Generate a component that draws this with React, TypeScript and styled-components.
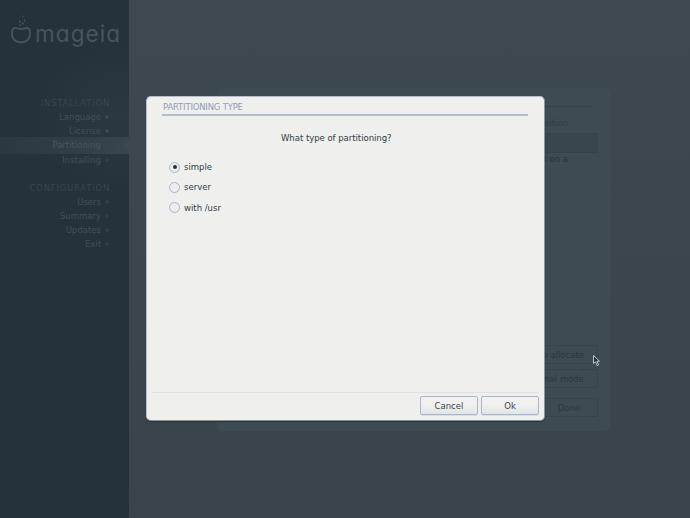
import React from 'react';
import styled, { createGlobalStyle } from 'styled-components';

const GlobalStyle = createGlobalStyle`
  * { box-sizing: border-box; }
  body { margin: 0; overflow: hidden; background: #3b464c; }
`;

const Screen = styled.div`
  position: relative;
  display: flex;
  width: 690px;
  height: 518px;
  overflow: hidden;
  background: linear-gradient(#3e494f, #39444a);
  color: #313d45;
  font: 8.5px/14px "DejaVu Sans", sans-serif;
  white-space: nowrap;
`;

const Sidebar = styled.nav`
  width: 129px;
  flex: none;
  padding-top: 15px;
  background:
    radial-gradient(ellipse 85px 75px at 118px 118px, #2b3841, transparent),
    #25323b;
`;

const Brand = styled.div`
  display: flex;
  height: 36px;
  padding-left: 10px;
  color: #48555d;
`;

const Wordmark = styled.span`
  margin-left: 3px;
  font: 400 22.5px/37px Inter, sans-serif;
  font-feature-settings: "cv11";
  letter-spacing: 1.1px;
`;

const StepGroup = styled.section<{ $top: number }>`
  margin-top: ${({ $top }) => $top}px;
`;

const GroupTitle = styled.div<{ $spacing: number }>`
  height: 14px;
  padding-right: 19px;
  color: #394650;
  text-align: right;
  letter-spacing: ${({ $spacing }) => $spacing}px;
`;

const Step = styled.div<{ $active?: boolean }>`
  position: relative;
  display: flex;
  align-items: center;
  justify-content: flex-end;
  height: 14.2px;
  padding-right: 21px;
  color: ${({ $active }) => ($active ? '#48555e' : '#424f58')};
  ${({ $active }) => $active && `
    &::before {
      content: '';
      position: absolute;
      inset: -1px 0 -1px;
      background: linear-gradient(90deg, #2b3841, #333f47 65%, #39464d);
    }
    &::after {
      content: '';
      position: absolute;
      right: 0;
      top: 2px;
      width: 6px;
      height: 11px;
      background: #3d484f;
      clip-path: polygon(100% 0, 0 50%, 100% 100%);
    }
  `}
`;

const StepLabel = styled.span`
  position: relative;
`;

const Bullet = styled.i<{ $done?: boolean }>`
  width: 4px;
  height: 4px;
  margin-left: 4px;
  margin-right: -1px;
  border: 1px solid #34414a;
  border-radius: 50%;
  background: ${({ $done }) => ($done ? '#435059' : '#2c3942')};
`;

const Installer = styled.main`
  width: 393px;
  height: 343px;
  margin: 88px 0 0 88px;
  padding: 18px 12px 14px;
  display: flex;
  flex-direction: column;
  border-radius: 5px;
  background: #3e4b53;
  box-shadow: 0 0 2px #3d4950;
`;

const InstallerRule = styled.div`
  height: 1px;
  flex: none;
  margin-right: 7px;
  background: #35424a;
`;

const InstallerText = styled.div<{ $top: number; $faint?: boolean }>`
  margin-top: ${({ $top }) => $top}px;
  padding-right: 30px;
  text-align: right;
  color: ${({ $faint }) => ($faint ? '#313e47' : '#25323b')};
`;

const Partition = styled.div`
  height: 20px;
  margin-top: 3px;
  background: #39464e;
  border: 1px solid #36424b;
`;

const InstallerButtons = styled.div`
  margin-top: auto;
  display: flex;
  flex-direction: column;
  align-items: flex-end;
`;

const DimButton = styled.button<{ $width: number; $gap?: number; $centered?: boolean }>`
  width: ${({ $width }) => $width}px;
  height: 19px;
  margin: 0 0 ${({ $gap = 0 }) => $gap}px;
  padding: 0 ${({ $centered }) => ($centered ? 0 : 13)}px 0 0;
  border: 1px solid #37444c;
  border-radius: 2px;
  background: transparent;
  color: #2a3740;
  font: inherit;
  text-align: ${({ $centered }) => ($centered ? 'center' : 'right')};
`;

const Dialog = styled.section`
  position: absolute;
  left: 146px;
  top: 96px;
  width: 399px;
  height: 325px;
  display: flex;
  flex-direction: column;
  border: 1px solid #b2bdce;
  border-right-color: #8b959c;
  border-bottom-color: #8b959c;
  border-radius: 5px;
  background: #efefee;
  box-shadow: 0 1px 1px #25323b;
`;

const DialogTitle = styled.h1`
  height: 19px;
  margin: 0 16px 0 15px;
  padding: 3px 0 0 1px;
  border-bottom: 2px solid #b2bdce;
  color: #919eb4;
  font: 8.5px/14px "DejaVu Sans", sans-serif;
  letter-spacing: -0.2px;
`;

const Question = styled.p`
  margin: 15px 0 0;
  padding-left: 134px;
  letter-spacing: -0.03px;
`;

const Options = styled.div`
  display: flex;
  flex-direction: column;
  padding: 12px 0 0 22px;
`;

const Option = styled.label`
  display: flex;
  align-items: center;
  height: 20.3px;
`;

const Radio = styled.i`
  width: 11px;
  height: 11px;
  margin-right: 4px;
  display: flex;
  align-items: center;
  justify-content: center;
  border: 1px solid #abb6c8;
  border-radius: 50%;
  background: #ecedee;
`;

const RadioDot = styled.i`
  width: 4px;
  height: 4px;
  border-radius: 50%;
  background: #25323b;
`;

const Actions = styled.footer`
  display: flex;
  justify-content: flex-end;
  gap: 3px;
  height: 28px;
  margin: auto 5px 0;
  padding-top: 3px;
  border-top: 1px solid #dfe1e6;
`;

const Button = styled.button`
  width: 58px;
  height: 19px;
  padding: 0;
  border: 1px solid #abb6cb;
  border-radius: 2px;
  background: linear-gradient(#f1f1f0 40%, #e2e4e5);
  box-shadow: 0 1px 0 #d9dde4;
  color: #3c4750;
  font: inherit;
`;

const Cursor = styled.svg`
  position: absolute;
  left: 592px;
  top: 354px;
`;

const CauldronLogo = () => (
  <svg width="22" height="32" viewBox="0 0 22 32" fill="none" stroke="currentColor" strokeWidth="1.9">
    <path d="M4 13C2 14 2 17 2 19c0 5 4 8.5 9 8.5s9-3.5 9-8.5c0-2 0-5-2-6-2.3-.8-3.6 1-7 1s-4.7-1.8-7-1Z" />
    <path d="M12.5 1.5h1M9 6.5h1.5M12 8.5h1.5M14 5.5h1M9.5 10h1" />
  </svg>
);

const installation = [
  { name: 'Language', done: true },
  { name: 'License', done: true },
  { name: 'Partitioning', active: true },
  { name: 'Installing' },
];
const configuration = ['Users', 'Summary', 'Updates', 'Exit'];
const options = ['simple', 'server', 'with /usr'];

export default function App() {
  return (
    <>
      <GlobalStyle />
      <Screen>
        <Sidebar>
          <Brand><CauldronLogo /><Wordmark>mageia</Wordmark></Brand>
          <StepGroup $top={45}>
            <GroupTitle $spacing={0.75}>INSTALLATION</GroupTitle>
            {installation.map(({ name, done, active }) => (
              <Step key={name} $active={active}>
                <StepLabel>{name}</StepLabel><Bullet $done={done} />
              </Step>
            ))}
          </StepGroup>
          <StepGroup $top={14}>
            <GroupTitle $spacing={0.75}>CONFIGURATION</GroupTitle>
            {configuration.map((name) => (
              <Step key={name}><StepLabel>{name}</StepLabel><Bullet /></Step>
            ))}
          </StepGroup>
        </Sidebar>
        <Installer>
          <InstallerRule />
          <InstallerText $top={9} $faint>solution</InstallerText>
          <Partition />
          <InstallerText $top={-1}>is on a</InstallerText>
          <InstallerButtons>
            <DimButton $width={120} $gap={5}>to allocate</DimButton>
            <DimButton $width={120} $gap={10}>normal mode</DimButton>
            <DimButton $width={58} $centered>Done</DimButton>
          </InstallerButtons>
        </Installer>
        <Dialog role="dialog" aria-modal="true">
          <DialogTitle>PARTITIONING TYPE</DialogTitle>
          <Question>What type of partitioning?</Question>
          <Options role="radiogroup">
            {options.map((name) => (
              <Option key={name}>
                <Radio>{name === 'simple' && <RadioDot />}</Radio>{name}
              </Option>
            ))}
          </Options>
          <Actions>
            <Button>Cancel</Button>
            <Button>Ok</Button>
          </Actions>
        </Dialog>
        <Cursor width="9" height="13" viewBox="0 0 9 13">
          <path d="M1.5 1.5v8l2-1.7 1.7 3.7 1.4-.7-1.7-3.5h2.6Z" fill="#25323b" stroke="#cfd3d6" strokeWidth=".9" />
        </Cursor>
      </Screen>
    </>
  );
}
